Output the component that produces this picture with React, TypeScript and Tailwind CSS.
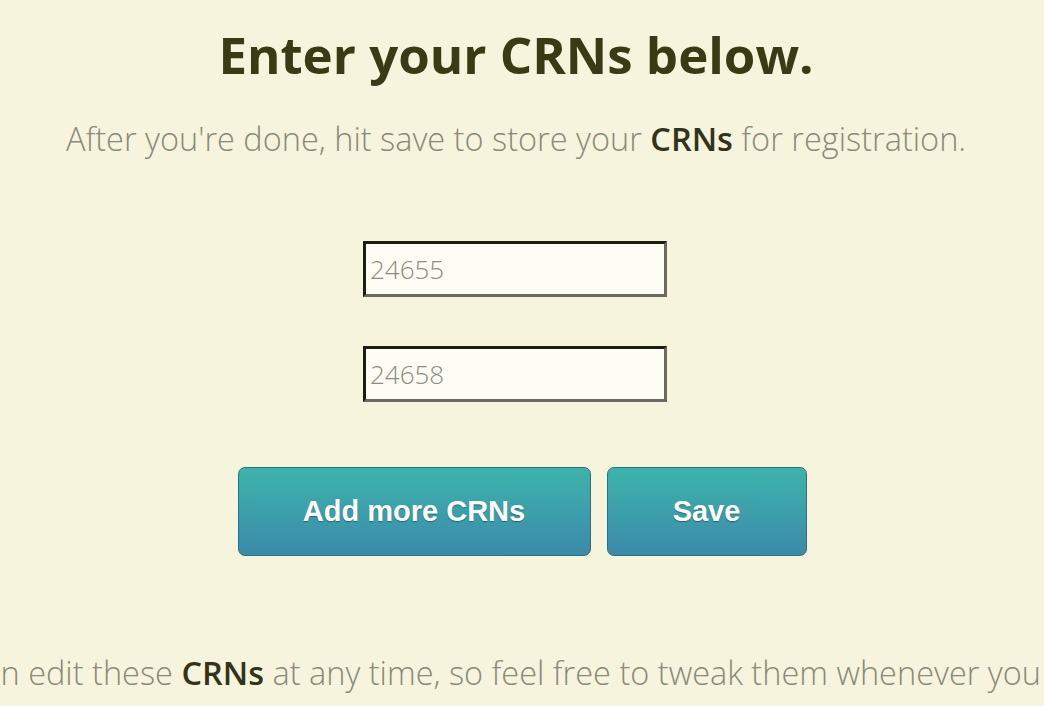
import React from 'react'

const crns = ['24655', '24658']

export default function App() {
  return (
    <div
      className="min-h-[706px] w-full overflow-hidden bg-[#f6f4dc] flex flex-col items-center"
      style={{ fontFamily: '"Open Sans", sans-serif' }}
    >
      <h1 className="mt-[22px] pr-[12px] text-[51px] leading-[64px] font-bold text-[#3a3a14]">
        Enter your CRNs below.
      </h1>
      <p className="mt-[31px] pr-[12px] text-[32.5px] leading-[44px] font-light text-[#8a8a78] whitespace-nowrap">
        After you're done, hit save to store your{' '}
        <span className="font-semibold text-[#33331a]">CRNs</span> for registration.
      </p>

      {/* CRN inputs */}
      <div className="mt-[80px] mr-[14px] flex flex-col gap-[49px]">
        {crns.map((crn) => (
          <input
            key={crn}
            defaultValue={crn}
            className="w-[304px] h-[56px] bg-[#fdfdf6] px-[4px] text-[26px] text-[#8c8c80] border-[3px] border-t-[#1e1e10] border-l-[#1e1e10] border-b-[#6a6a60] border-r-[#6a6a60] outline-none"
            style={{ fontFamily: '"Open Sans", sans-serif', fontWeight: 300 }}
          />
        ))}
      </div>

      {/* Buttons */}
      <div className="mt-[65px] flex gap-[16px]">
        <button className="w-[353px] h-[89px] rounded-[7px] border border-[#2c6f80] bg-gradient-to-b from-[#3eb4ab] to-[#3b8aa9] text-white text-[29px] font-bold [text-shadow:0_1px_1px_rgba(0,0,0,0.35)] font-['Liberation_Sans',Arial,sans-serif]">
          Add more CRNs
        </button>
        <button className="w-[200px] h-[89px] rounded-[7px] border border-[#2c6f80] bg-gradient-to-b from-[#3eb4ab] to-[#3b8aa9] text-white text-[29px] font-bold [text-shadow:0_1px_1px_rgba(0,0,0,0.35)] font-['Liberation_Sans',Arial,sans-serif]">
          Save
        </button>
      </div>

      <div className="mt-[95px] w-full flex justify-center">
        <p className="pr-[12px] text-[32.5px] leading-[44px] font-light text-[#8a8a78] whitespace-nowrap">
          You can edit these <span className="font-semibold text-[#33331a]">CRNs</span> at any
          time, so feel free to tweak them whenever you want.
        </p>
      </div>
    </div>
  )
}
